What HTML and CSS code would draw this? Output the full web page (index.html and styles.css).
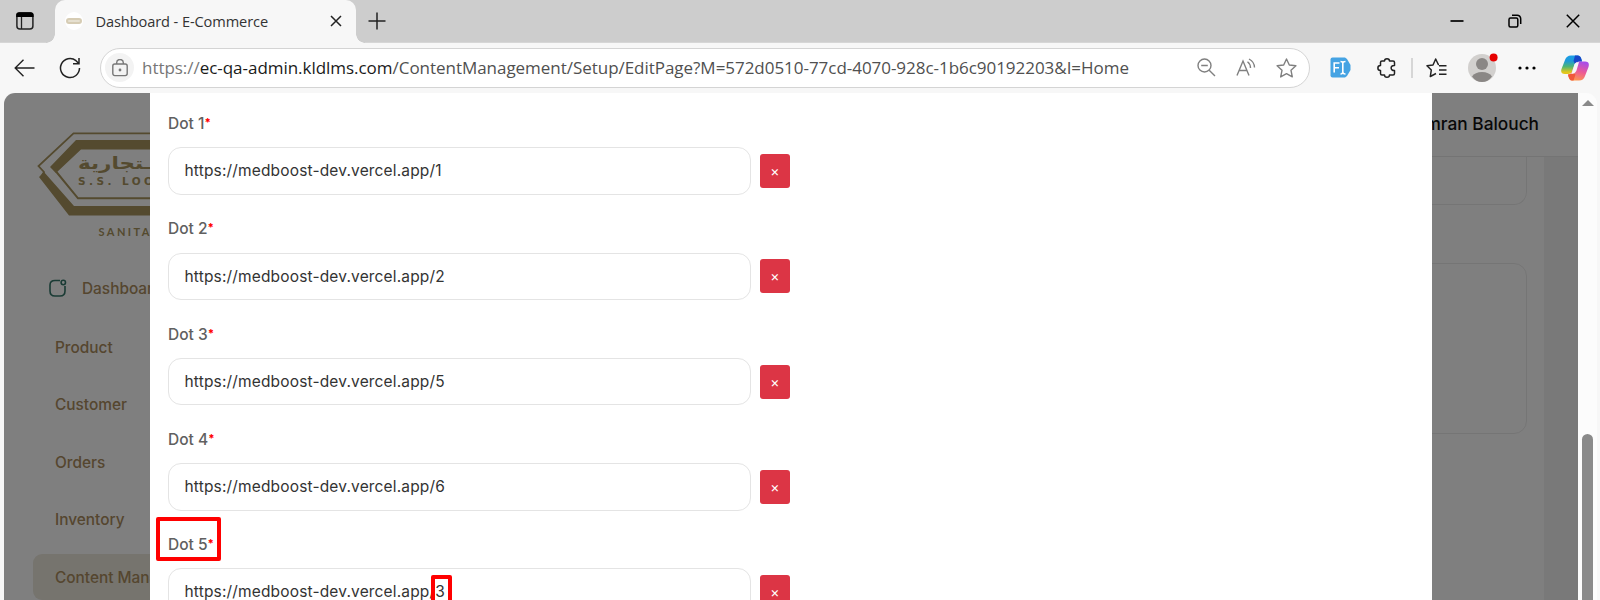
FILE: index.html
```html
<!DOCTYPE html>
<html lang="en">
<head>
    <meta charset="UTF-8">
    <meta name="viewport" content="width=device-width, initial-scale=1.0">
    <title>Dashboard - E-Commerce</title>
    <link rel="stylesheet" href="styles.css">
</head>
<body>

    <!-- Browser tabs -->
    <div class="tab-bar">
        <svg class="tab-menu" width="20" height="20" viewBox="0 0 20 20">
            <rect x="1.9" y="2" width="16" height="16" rx="3" fill="none" stroke="#222" stroke-width="1.5"/>
            <path d="M1.2 6V4.500A3 3 0 0 1 4.200 1.300H15.600A3 3 0 0 1 18.600 4.500V6Z" fill="#000"/>
            <path d="M6.500 6V18" stroke="#222" stroke-width="1.300"/>
        </svg>
        <div class="tab">
            <span class="favicon"><i></i></span>
            <span class="tab-title">Dashboard - E-Commerce</span>
            <svg width="12" height="12" viewBox="0 0 12 12"><path d="M1 1L11 11M11 1L1 11" stroke="#222" stroke-width="1.500"/></svg>
        </div>
        <svg class="new-tab" width="18" height="18" viewBox="0 0 18 18"><path d="M9 0.500V17.500M0.500 9H17.500" stroke="#222" stroke-width="1.500"/></svg>
        <div class="window-buttons">
            <svg width="14" height="14" viewBox="0 0 14 14"><path d="M0.500 7H13.500" stroke="#000" stroke-width="1.700"/></svg>
            <svg width="14" height="14" viewBox="0 0 14 14" fill="none" stroke="#000" stroke-width="1.500">
                <rect x="1" y="4" width="8.800" height="9" rx="1.500"/>
                <path d="M4 1.200H9A3.500 3.500 0 0 1 12.700 4.700V10"/>
            </svg>
            <svg width="14" height="14" viewBox="0 0 14 14"><path d="M0.800 0.800L13.200 13.200M13.200 0.800L0.800 13.200" stroke="#000" stroke-width="1.500"/></svg>
        </div>
    </div>

    <!-- Address bar -->
    <div class="toolbar">
        <svg class="back" width="21" height="18" viewBox="0 0 21 18" fill="none" stroke="#222" stroke-width="1.400"><path d="M20.500 9H1.500M9.500 0.700L1.200 9L9.500 17.300"/></svg>
        <svg class="reload" width="22" height="22" viewBox="0 0 22 22" fill="none" stroke="#222" stroke-width="1.500"><path d="M20.500 11A9.500 9.500 0 1 1 17 3.700L19.800 6.500M20 1V6.800H14"/></svg>
        <div class="address">
            <span class="lock">
                <svg width="16" height="18" viewBox="0 0 16 18" fill="none" stroke="#777" stroke-width="1.400">
                    <rect x="0.800" y="5" width="14.400" height="11.600" rx="2"/>
                    <path d="M4.700 5V3.800A3.300 3.300 0 0 1 11.300 3.800V5"/>
                    <circle cx="8" cy="11" r="0.700" fill="#777"/>
                </svg>
            </span>
            <span class="url">https://<b>ec-qa-admin.kldlms.com</b><em>/ContentManagement/Setup/EditPage?M=572d0510-77cd-4070-928c-1b6c90192203&amp;I=Home</em></span>
            <div class="address-icons">
                <svg width="19" height="19" viewBox="0 0 19 19" fill="none" stroke="#808080" stroke-width="1.400"><circle cx="7.500" cy="7.500" r="6.500"/><path d="M4.200 7.500H10.800M12.200 12.200L18 18"/></svg>
                <svg width="20" height="19" viewBox="0 0 20 19" fill="none" stroke="#808080" stroke-width="1.400"><path d="M1 17.500L7 3L13 17.500M3.200 12.500H10.800M11.500 3.800Q14.500 6 14.500 10M13 1Q18.500 4 18.500 9.500"/></svg>
                <svg width="21" height="20" viewBox="0 0 21 20" fill="none" stroke="#808080" stroke-width="1.400" stroke-linejoin="round"><path d="M10.500 1L13.300 7L19.900 7.800L15 12.300L16.300 18.900L10.500 15.600L4.700 18.900L6 12.300L1.100 7.800L7.700 7Z"/></svg>
            </div>
        </div>
        <div class="extensions">
            <svg width="21" height="21" viewBox="0 0 21 21"><path d="M2.500 0.500H15L17 2L20.500 8V13L17 19L15 20.500H2.500Q0.500 20.500 0.500 18.500V2.500Q0.500 0.500 2.500 0.500Z" fill="#45a3e3"/><path d="M4.200 15.500V6H9.500M4 10.700H9M10.500 4.500Q12.800 4.500 12.800 6V15Q12.800 17 10.500 17M15.500 4.500Q12.800 4.500 12.800 6M12.800 15Q12.800 17 15.500 17" fill="none" stroke="#fff" stroke-width="1.600"/></svg>
            <svg class="puzzle" width="20" height="20" viewBox="0 0 20 20" fill="none" stroke="#222" stroke-width="1.500" stroke-linejoin="round"><path d="M3.500 4.500Q3.500 3 5 3H7.500C7.500 0 12.500 0 12.500 3H16Q17.500 3 17.500 4.500V7.500C13 7 13 13 17.500 12.500V15.500Q17.500 17 16 17H12.500C12.500 20 7.500 20 7.500 17H5Q3.500 17 3.500 15.500V12.500C0 12.500 0 7.500 3.500 7.500Z"/></svg>
            <span class="divider"></span>
            <svg class="favorites" width="21" height="20" viewBox="0 0 21 20" fill="none" stroke="#222" stroke-width="1.500" stroke-linejoin="round"><path d="M13 6.500L12.300 6.500L9.700 1L7 7L1 7.800L5.300 12L4.300 18.500L10 15.500M13 7.800H20.500M13 12H20.500M13 16.200H20.500"/></svg>
            <svg class="avatar" width="30" height="30" viewBox="0 0 30 30">
                <circle cx="14" cy="16" r="14" fill="#d2d0ce"/>
                <circle cx="14" cy="12" r="6" fill="#8a8785"/>
                <path d="M4 24.500Q7 20 14 20T24 24.500Q20 30 14 30T4 24.500Z" fill="#8a8785"/>
                <circle cx="25.600" cy="5.600" r="4" fill="#e60000"/>
            </svg>
            <svg class="dots" width="18" height="4" viewBox="0 0 18 4"><circle cx="2" cy="2" r="1.600"/><circle cx="9" cy="2" r="1.600"/><circle cx="16" cy="2" r="1.600"/></svg>
            <svg class="copilot" width="28" height="26" viewBox="0 0 28 26">
                <defs>
                    <linearGradient id="cool" x1="0" y1="0" x2="0" y2="1"><stop offset="0" stop-color="#1b9de8"/><stop offset="0.300" stop-color="#1e9ad8"/><stop offset="0.600" stop-color="#4fb573"/><stop offset="0.900" stop-color="#e3c71c"/></linearGradient>
                    <linearGradient id="warm" x1="0.600" y1="0" x2="0.300" y2="1"><stop offset="0" stop-color="#a84de8"/><stop offset="0.500" stop-color="#ec5a96"/><stop offset="1" stop-color="#ff9a4a"/></linearGradient>
                </defs>
                <path d="M10 0.500H17Q20 0.500 21 6.500H18Q15 6.500 14 9L11 17Q10 19 7 19H4Q-1 19 0.500 14L4 5Q5.500 0.500 10 0.500Z" fill="url(#cool)"/>
                <path d="M14 0.500H17Q20 0.500 21 6.500H18Q15 6.500 14 9L12.500 6Z" fill="#1747c8"/>
                <path d="M18 25.500H11Q8 25.500 7 19.500Q10 19.500 11 17L14 9Q15 6.500 18 6.500H24Q29 6.500 27.500 12L24 21Q22.500 25.500 18 25.500Z" fill="url(#warm)"/>
                <path d="M7 19.500Q10 19.500 11 17L14.500 19.500L12.500 25.500H11Q8 25.500 7 19.500Z" fill="#f0583a"/>
                <path d="M13.500 9Q14.500 7 18 7L15.500 15.500Q14 19 10 19Q10.500 18.500 11 17Z" fill="#f7f7f7"/>
            </svg>
        </div>
    </div>

    <!-- Page viewport -->
    <div class="viewport">
        <div class="page">
            <aside class="sidebar">
                <svg class="logo" width="117" height="115" viewBox="33 125 117 115">
                    <g fill="none" stroke="#a8945e">
                        <path d="M150 133.300H73.500L38.500 166L44 172L41 177" stroke-width="1.800"/>
                        <path d="M150 198.300H78L54 169" stroke-width="2"/>
                    </g>
                    <path d="M150 140H76L50 167L56 173L81 149.500H150Z" fill="#a8945e"/>
                    <path d="M39 177L44 172L74 206H150V215.500H69Z" fill="#a8945e"/>
                    <text class="logo-arabic" x="78" y="169" textLength="73" lengthAdjust="spacingAndGlyphs">ـتجارية</text>
                    <text class="logo-name" x="78" y="185" textLength="75">S.S. LOO</text>
                    <text class="logo-sub" x="98.500" y="236" textLength="51">SANITA</text>
                </svg>
                <nav>
                    <a class="nav-item dashboard">
                        <svg width="18" height="18" viewBox="0 0 18 18" fill="none" stroke="#34776a" stroke-width="1.600"><path d="M11 1.500H6Q1 1.500 1 6V12Q1 17 6 17H11Q16 17 16 12V7"/><circle cx="14.300" cy="3.500" r="2.200"/></svg>
                        Dashboard
                    </a>
                    <a class="nav-item">Product</a>
                    <a class="nav-item">Customer</a>
                    <a class="nav-item">Orders</a>
                    <a class="nav-item">Inventory</a>
                    <a class="nav-item active">Content Management</a>
                </nav>
            </aside>
            <main class="content">
                <header class="topbar">Imran Balouch</header>
                <div class="panel">
                    <div class="box box-top"></div>
                    <div class="box box-bottom"></div>
                </div>
            </main>
        </div>

        <div class="backdrop">
            <div class="modal">
                <div class="field">
                    <label>Dot 1<span>*</span></label>
                    <div class="field-row"><div class="input">https://medboost-dev.vercel.app/1</div><button>×</button></div>
                </div>
                <div class="field">
                    <label>Dot 2<span>*</span></label>
                    <div class="field-row"><div class="input">https://medboost-dev.vercel.app/2</div><button>×</button></div>
                </div>
                <div class="field">
                    <label>Dot 3<span>*</span></label>
                    <div class="field-row"><div class="input">https://medboost-dev.vercel.app/5</div><button>×</button></div>
                </div>
                <div class="field">
                    <label>Dot 4<span>*</span></label>
                    <div class="field-row"><div class="input">https://medboost-dev.vercel.app/6</div><button>×</button></div>
                </div>
                <div class="field">
                    <label>Dot 5<span>*</span><i class="mark mark-label"></i></label>
                    <div class="field-row"><div class="input">https://medboost-dev.vercel.app/3<i class="mark mark-value"></i></div><button>×</button></div>
                </div>
            </div>
        </div>

        <div class="scrollbar">
            <div class="arrow"></div>
            <div class="thumb"></div>
        </div>
    </div>

</body>
</html>
```

FILE: styles.css
```css
* {
    box-sizing: border-box;
}

body {
    margin: 0;
    width: 1600px;
    height: 600px;
    overflow: hidden;
    background-color: #f7f7f7;
    font-family: 'Open Sans', sans-serif;
    display: flex;
    flex-direction: column;
}

svg {
    display: block;
    flex: none;
}

/* Tabs */
.tab-bar {
    height: 43px;
    flex: none;
    display: flex;
    align-items: center;
    background-color: #cdcdcd;
    border-bottom: 1px solid #d6d6d6;
}

.tab-menu {
    margin-left: 15px;
}

.tab {
    width: 301px;
    height: 43px;
    margin-left: 20px;
    padding: 0 14px 0 10px;
    display: flex;
    align-items: center;
    background-color: #f7f7f7;
    border-radius: 10px 10px 0 0;
    position: relative;
}

/* curved feet of the tab */
.tab::before,
.tab::after {
    content: "";
    position: absolute;
    bottom: 0;
    width: 9px;
    height: 9px;
}

.tab::before {
    left: -9px;
    background: radial-gradient(circle at 0 0, #cdcdcd 8.5px, #f7f7f7 9px);
}

.tab::after {
    right: -9px;
    background: radial-gradient(circle at 100% 0, #cdcdcd 8.5px, #f7f7f7 9px);
}

.favicon {
    width: 18px;
    height: 18px;
    border-radius: 50%;
    background-color: #fff;
    display: flex;
    align-items: center;
    justify-content: center;
}

.favicon i {
    width: 16px;
    height: 6px;
    border: 2px solid #d6ccb4;
    border-radius: 3px;
    background-color: #e6e0d0;
}

.tab-title {
    flex: 1;
    margin-left: 12.5px;
    padding-bottom: 1px;
    font-size: 14.6px;
    letter-spacing: -0.1px;
    color: #333;
    white-space: nowrap;
}

.new-tab {
    margin-left: 12px;
}

.window-buttons {
    margin-left: auto;
    margin-right: 20px;
    display: flex;
    gap: 44px;
}

/* Toolbar */
.toolbar {
    height: 49px;
    flex: none;
    display: flex;
    align-items: center;
}

.back {
    margin-left: 14px;
}

.reload {
    margin-left: 24px;
}

.address {
    width: 1210px;
    height: 40px;
    margin-left: 19px;
    padding: 0 12px 0 4px;
    display: flex;
    align-items: center;
    background-color: #fff;
    border: 1px solid #d4d4d4;
    border-radius: 20px;
}

.lock {
    width: 29px;
    height: 29px;
    border-radius: 50%;
    background-color: #f3f3f3;
    display: flex;
    align-items: center;
    justify-content: center;
}

.url {
    flex: 1;
    margin-left: 8px;
    font-size: 17px;
    letter-spacing: -0.035px;
    color: #777;
    white-space: nowrap;
}

.url b {
    font-weight: 400;
    color: #1a1a1a;
}

.url em {
    font-style: normal;
    color: #505050;
}

.address-icons {
    display: flex;
    align-items: center;
    gap: 20px;
}

.extensions {
    margin-left: 20px;
    display: flex;
    align-items: center;
}

.puzzle {
    margin-left: 26px;
}

.divider {
    width: 2px;
    height: 20px;
    margin-left: 14px;
    background-color: #d6d6d6;
}

.favorites {
    margin-left: 13px;
}

.avatar {
    margin-left: 21px;
    margin-top: -2px;
}

.dots {
    margin-left: 20px;
}

.copilot {
    margin-left: 25px;
}

/* Viewport */
.viewport {
    flex: 1;
    min-height: 0;
    margin: 1px 3px 0 4px;
    display: flex;
    position: relative;
    overflow: hidden;
    border-radius: 11px 11px 0 0;
    background-color: #fcfcfc;
    font-family: Inter, 'Open Sans', sans-serif;
}

.page {
    width: 1574px;
    height: 507px;
    display: flex;
    background-color: #fff;
}

.sidebar {
    width: 260px;
    flex: none;
    padding: 32px 0 0 29px;
}

.logo-arabic {
    font: bold 17px 'DejaVu Sans', sans-serif;
    fill: #a8945e;
}

.logo-name {
    font: bold 10.5px 'DejaVu Sans', sans-serif;
    fill: #a8945e;
}

.logo-sub {
    font: bold 11px Lato, sans-serif;
    fill: #a8945e;
}

nav {
    margin-top: 25px;
    display: flex;
    flex-direction: column;
    gap: 11.5px;
}

.nav-item {
    height: 46px;
    padding-left: 22px;
    display: flex;
    align-items: center;
    font-size: 15.4px;
    font-weight: 500;
    color: #ab8c5e;
    white-space: nowrap;
    border-radius: 9px;
}

.dashboard {
    padding-left: 16px;
    margin-bottom: 1.5px;
    gap: 15px;
}

.active {
    background-color: #ece8dd;
}

.content {
    flex: 1;
    background-color: #f2f2f2;
}

.topbar {
    height: 64px;
    padding: 0 39px 2px 0;
    display: flex;
    align-items: center;
    justify-content: flex-end;
    background-color: #fff;
    border-bottom: 1px solid #e8e8e8;
    font-size: 17.3px;
    font-weight: 500;
    color: #111;
}

.panel {
    height: 443px;
    margin-right: 34px;
    padding-right: 17px;
    background-color: #fff;
}

.box {
    border: 1px solid #ebebeb;
}

.box-top {
    height: 48px;
    border-top: 0;
    border-radius: 0 0 13px 13px;
}

.box-bottom {
    height: 171px;
    margin-top: 58px;
    border-radius: 13px;
}

/* Modal */
.backdrop {
    position: absolute;
    left: 0;
    top: 0;
    width: 1574px;
    height: 507px;
    padding-left: 146px;
    background-color: rgba(0, 0, 0, 0.5);
}

.modal {
    width: 1282px;
    height: 507px;
    padding: 18px;
    background-color: #fff;
    overflow: hidden;
}

.field {
    height: 105.25px;
}

.field label {
    display: block;
    position: relative;
    height: 36.3px;
    line-height: 25px;
    font-size: 15.5px;
    font-weight: 500;
    color: #606060;
}

.field label span {
    font-size: 11px;
    font-weight: 800;
    line-height: 1;
    vertical-align: 3px;
    color: #f00;
}

.field-row {
    display: flex;
    align-items: center;
    gap: 9px;
}

.input {
    width: 583px;
    height: 47.5px;
    padding-left: 15.5px;
    border: 1px solid #e4e4e4;
    border-radius: 13px;
    font-size: 15.5px;
    letter-spacing: 0.16px;
    line-height: 46px;
    color: #333;
    position: relative;
}

.field button {
    width: 30px;
    height: 34px;
    padding: 0 0 1px;
    border: 0;
    border-radius: 3px;
    background-color: #dc3545;
    color: #fff;
    font: 14px Inter, sans-serif;
}

/* red highlight frames */
.mark {
    position: absolute;
    border: 4px solid #f00;
    border-radius: 2px;
}

.mark-label {
    left: -12px;
    top: -15px;
    width: 65px;
    height: 44px;
}

.mark-value {
    left: 261.5px;
    top: 6px;
    width: 21px;
    height: 50px;
}

/* Scrollbar */
.scrollbar {
    flex: 1;
    display: flex;
    flex-direction: column;
    align-items: center;
}

.arrow {
    margin-top: 7px;
    border: 6px solid transparent;
    border-top: 0;
    border-bottom: 6px solid #8a8a8a;
}

.thumb {
    width: 11px;
    flex: 1;
    margin-top: 328px;
    background-color: #8a8a8a;
    border-radius: 6px 6px 0 0;
}
```
